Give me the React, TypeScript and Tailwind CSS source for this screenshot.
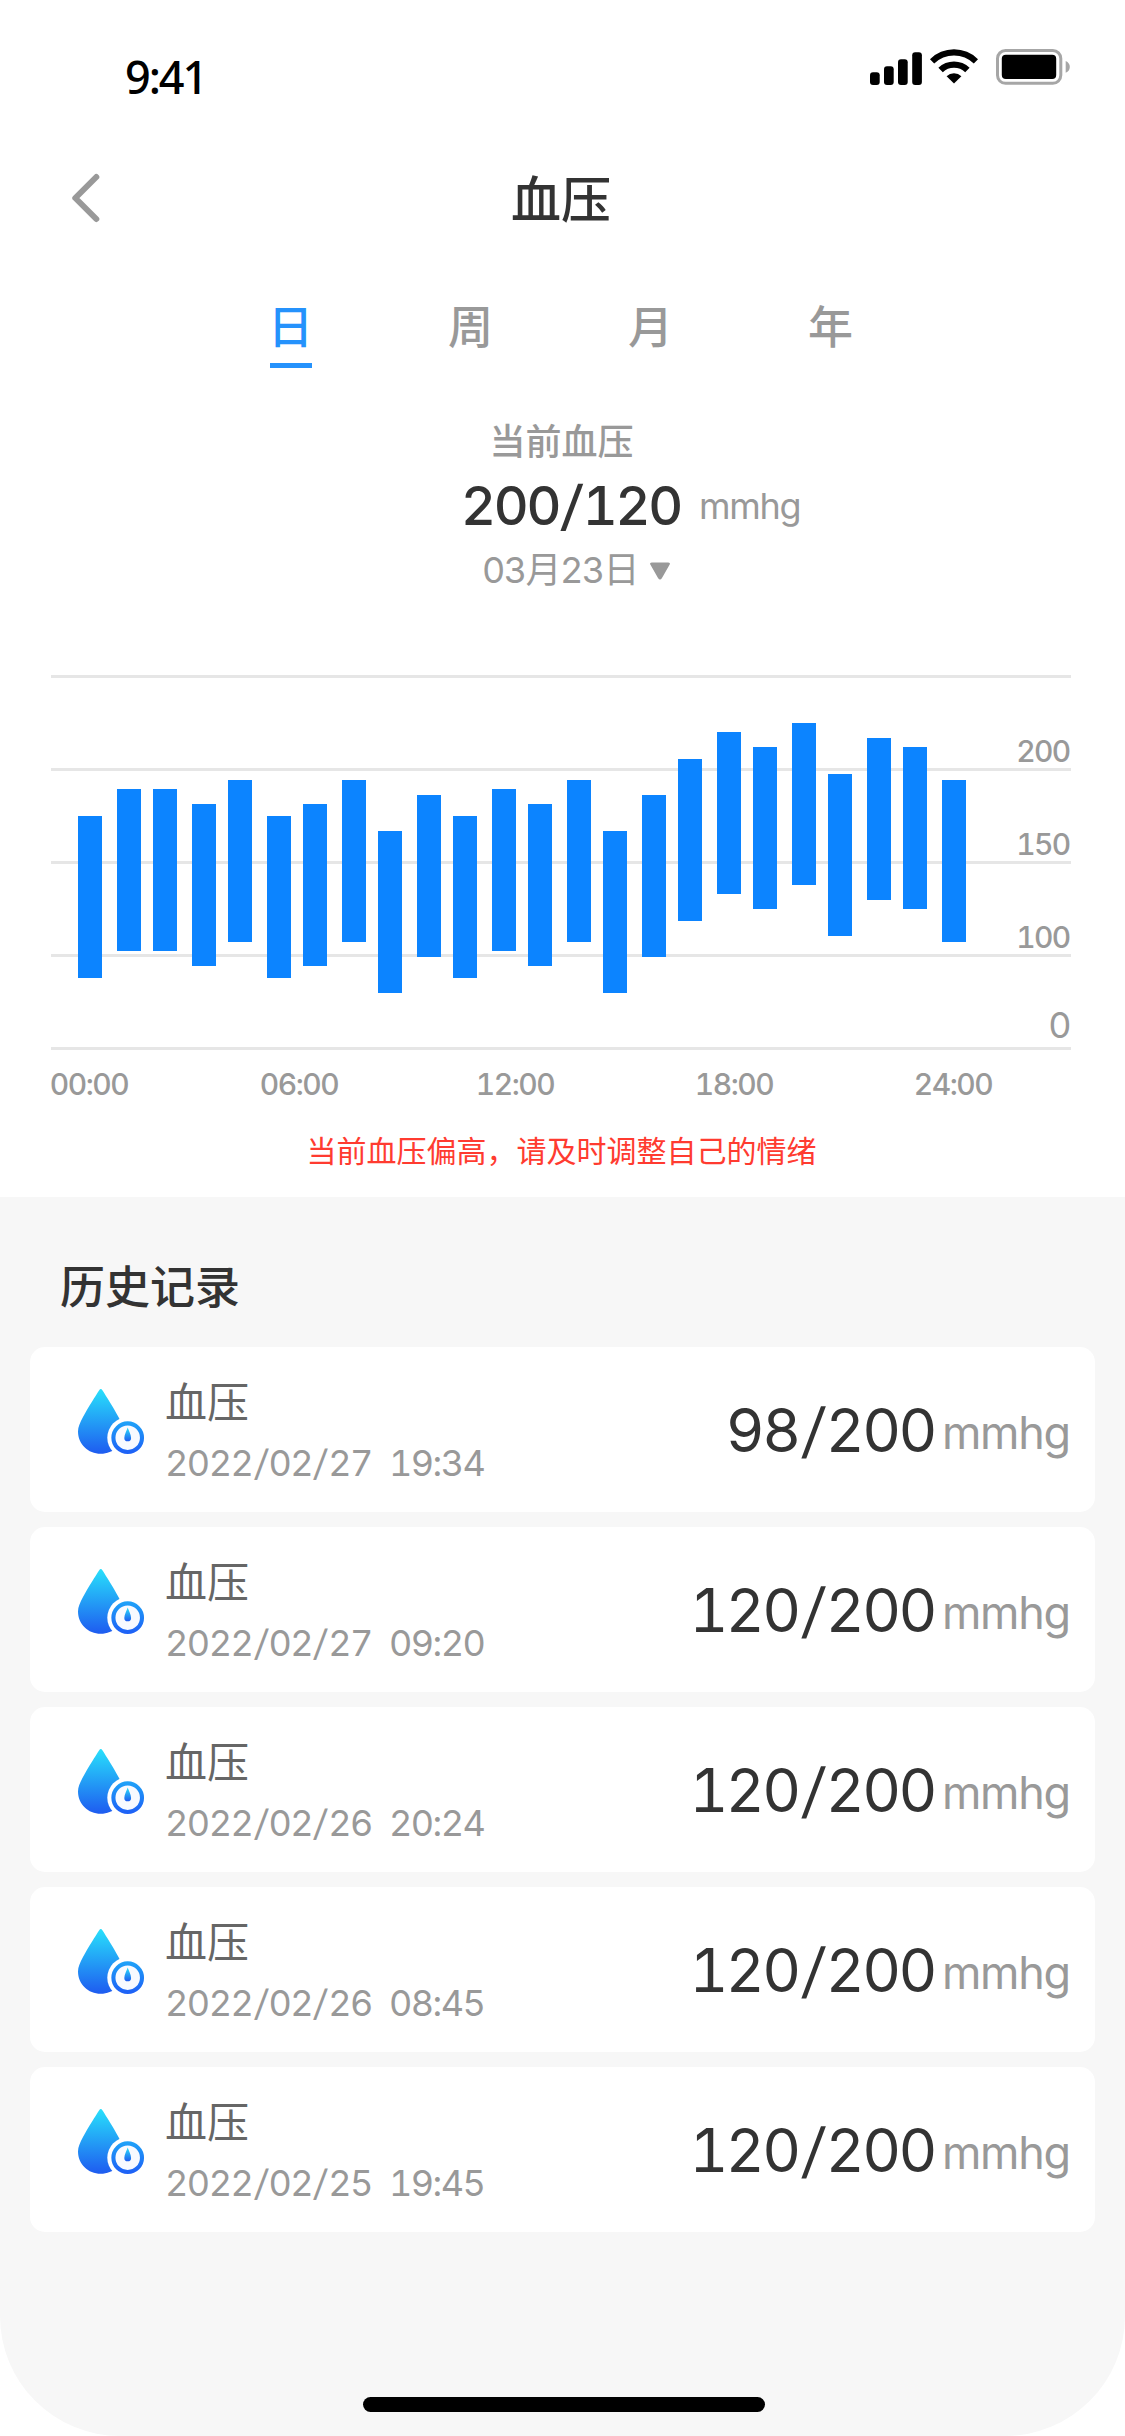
import { useState } from "react"

const tabs = ["日", "周", "月", "年"]

const records = [
  { date: "2022/02/27", time: "19:34", value: "98/200" },
  { date: "2022/02/27", time: "09:20", value: "120/200" },
  { date: "2022/02/26", time: "20:24", value: "120/200" },
  { date: "2022/02/26", time: "08:45", value: "120/200" },
  { date: "2022/02/25", time: "19:45", value: "120/200" },
]

// top of every bar, all bars share the same height
const tops = [
  156, 129, 129, 144, 120, 156, 144, 120, 171, 135, 156, 129,
  144, 120, 171, 135, 99, 72, 87, 63, 114, 78, 87, 120,
]

// bars come in pairs: 39px then 36px apart
const barX = (i: number) => 78 + Math.floor(i / 2) * 75 + (i % 2) * 39

const hours = [
  { label: "00:00", x: 90 },
  { label: "06:00", x: 300 },
  { label: "12:00", x: 516 },
  { label: "18:00", x: 735 },
  { label: "24:00", x: 954 },
]

// digits sit tight, the slash between them gets some air
const Slashed = ({ text, slash }: { text: string; slash: string }) => (
  <>
    {text.split("/").map((part, i) => (
      <span key={i}>{i > 0 && <span className={`inline-block -skew-x-6 ${slash}`}>/</span>}{part}</span>
    ))}
  </>
)

const StatusBar = () => (
  <div className="flex h-[132px] shrink-0 justify-between">
    <span className="pt-[46px] pl-[125px] font-['Noto_Sans'] text-[45px] leading-[62px] font-medium tracking-[-2.1px] text-black">9:41</span>
    <svg className="mt-[45px] mr-[53px]" width="204" height="44" viewBox="868 45 204 44" fill="black">
      <rect x="870" y="72.3" width="9.7" height="12.7" rx="3" />
      <rect x="884" y="66.3" width="9.7" height="18.7" rx="3" />
      <rect x="898" y="59.3" width="9.7" height="25.7" rx="3" />
      <rect x="912.2" y="52.3" width="9.7" height="32.7" rx="3" />
      <path d="M930 59.2 A34 34 0 0 1 978 59.2 L973.8 63.6 A28 28 0 0 0 934.2 63.6 Z" />
      <path d="M938.4 67.8 A22.3 22.3 0 0 1 969.6 67.8 L965.2 72.2 A16.2 16.2 0 0 0 942.8 72.2 Z" />
      <path d="M946.6 76.2 A10.8 10.8 0 0 1 961.4 76.2 L954 83.4 Z" />
      <rect x="997.5" y="50.5" width="63.3" height="32.8" rx="8" fill="none" stroke="#a6a6a6" strokeWidth="3" />
      <rect x="1001.8" y="54.8" width="54.4" height="24.2" rx="4" />
      <path d="M1065.7 61 Q1069.8 63 1069.8 66.9 Q1069.8 70.8 1065.7 72.8 Z" fill="#a6a6a6" />
    </svg>
  </div>
)

const Chart = () => (
  <svg className="mt-[68px] block" width="1125" height="450" viewBox="0 0 1125 450">
    {[15, 108, 201, 294, 387].map(y => (
      <rect key={y} x="51" y={y} width="1020" height="3" fill="#e6e6e6" />
    ))}
    {tops.map((y, i) => (
      <rect key={i} x={barX(i)} y={y} width="24" height="162" fill="#0c84ff" />
    ))}
    <g fill="#999999" textAnchor="end" className="text-[30px] font-medium tracking-[-1.7px] tabular-nums">
      <text x="1069.5" y="102">200</text>
      <text x="1069.5" y="195">150</text>
      <text x="1069.5" y="288">100</text>
      <text x="1070" y="378" className="text-[36px] font-normal">0</text>
    </g>
    <g fill="#999999" textAnchor="middle" className="text-[30px] font-medium tracking-[-1.5px] tabular-nums">
      {hours.map(h => <text key={h.label} x={h.x - 1} y="435">{h.label}</text>)}
    </g>
  </svg>
)

const DropIcon = ({ id }: { id: string }) => (
  <svg className="mt-[39px] ml-[45px] shrink-0" width="72" height="72" viewBox="75 1386 72 72">
    <defs>
      <linearGradient id={`drop-${id}`} x1="0" y1="0" x2="0" y2="1">
        <stop offset="0" stopColor="#28e0fb" />
        <stop offset="1" stopColor="#1e5bf0" />
      </linearGradient>
      <linearGradient id={`ring-${id}`} x1="0" y1="0" x2="0" y2="1">
        <stop offset="0" stopColor="#1f9ff8" />
        <stop offset="1" stopColor="#1e62f6" />
      </linearGradient>
    </defs>
    <path
      d="M99.2 1390.3 Q100.8 1387.8 102.4 1390.3 C106 1396 113 1407 118.5 1417 C121.5 1422.5 123.6 1427 123.6 1431.5 C123.6 1444 113.5 1453.8 100.8 1453.8 C88.1 1453.8 78 1444 78 1431.5 C78 1427 80 1422.5 83 1417 C88.5 1407 95.6 1396 99.2 1390.3 Z"
      fill={`url(#drop-${id})`}
    />
    <circle cx="127.7" cy="1437.7" r="20.4" fill="white" />
    <circle cx="127.7" cy="1437.7" r="14.3" fill="#f8faff" stroke={`url(#ring-${id})`} strokeWidth="4.1" />
    <path
      d="M127.7 1427.6 C128.5 1430.5 131.1 1434.6 131.1 1437.9 A3.4 3.4 0 0 1 124.3 1437.9 C124.3 1434.6 126.9 1430.5 127.7 1427.6 Z"
      fill={`url(#drop-${id})`}
    />
  </svg>
)

export default function App() {
  const [active, setActive] = useState("日")

  return (
    <div className="w-[1125px] h-[2436px] bg-white font-[Inter,'Noto_Sans_CJK_SC',sans-serif] text-[#333333]">
      <div className="flex h-full flex-col overflow-hidden rounded-b-[120px]">

        <div className="flex h-[1197px] shrink-0 flex-col bg-white">
          <StatusBar />

          {/* Nav bar */}
          <div className="grid h-[132px] shrink-0 grid-cols-[200px_1fr_200px] items-center">
            <svg className="ml-[66px]" width="40" height="54" viewBox="66 171 40 54" fill="none">
              <path d="M96.3 177 L75.3 198 L96.3 219" stroke="#999999" strokeWidth="6" strokeLinecap="round" strokeLinejoin="round" />
            </svg>
            <h1 className="pt-[3px] pr-[3px] text-center text-[50px] leading-[60px] font-medium">血压</h1>
          </div>

          {/* Period tabs */}
          <div className="flex gap-[135px] pt-[34px] pl-[268px]">
            {tabs.map(tab => (
              <button key={tab} onClick={() => setActive(tab)} className="flex w-[45px] flex-col items-center">
                <span className={`text-[45px] leading-[60px] font-medium ${tab === active ? "text-[#2592fc]" : "text-[#999999]"}`}>{tab}</span>
                <span className={`mt-[5px] h-[5px] w-[42px] ${tab === active ? "bg-[#2592fc]" : ""}`} />
              </button>
            ))}
          </div>

          <div className="mt-[52px] pr-[2px] text-center text-[36px] leading-[44px] font-medium text-[#999999]">当前血压</div>
          <div className="mt-[12px] flex pl-[461px] leading-[60px]">
            <span className="w-[238px] text-[54px] font-medium tracking-[-2.3px] tabular-nums"><Slashed text="200/120" slash="mx-[3px]" /></span>
            <span className="text-[36px] tracking-[-1.3px] text-[#999999]">mmhg</span>
          </div>
          <div className="mt-[12px] flex items-center pl-[482px] text-[36px] leading-[44px] text-[#999999] tabular-nums">
            <span className="w-[167px] tracking-[-1.6px]">03月23日</span>
            <svg className="mt-[2px]" width="22" height="20" viewBox="0 0 22 20" fill="#999999">
              <path d="M3 1.5 H19 Q22 1.5 20.4 4 L13 17 Q11 20 9 17 L1.6 4 Q0 1.5 3 1.5 Z" />
            </svg>
          </div>

          <Chart />

          <p className="mt-[21px] pr-[2px] text-center text-[30px] leading-[40px] text-[#ff3b30]">当前血压偏高，请及时调整自己的情绪</p>
        </div>

        {/* History */}
        <div className="flex flex-1 flex-col bg-[#f7f7f7] px-[30px] pt-[61px]">
          <h2 className="pl-[30px] text-[45px] leading-[60px] font-medium">历史记录</h2>
          <div className="mt-[29px] flex flex-col gap-[15px]">
            {records.map((r, i) => (
              <div key={i} className="flex h-[165px] rounded-[15px] bg-white">
                <DropIcon id={String(i)} />
                <div className="ml-[18px] flex flex-col pt-[31px]">
                  <span className="text-[42px] leading-[50px] text-[#666666]">血压</span>
                  <span className="mt-[13px] flex gap-[17px] text-[36px] leading-[44px] tracking-[-1.5px] text-[#999999] tabular-nums">
                    <span><Slashed text={r.date} slash="mx-[2.3px]" /></span>
                    <span>{r.time}</span>
                  </span>
                </div>
                <div className="ml-auto flex pt-[53px] leading-[60px]">
                  <span className="text-[60px] tracking-[-2.5px] tabular-nums"><Slashed text={r.value} slash="mx-[4px]" /></span>
                  <span className="w-[160px] pt-[3px] pl-[7px] text-[45px] tracking-[-1.3px] text-[#999999]">mmhg</span>
                </div>
              </div>
            ))}
          </div>

          {/* Home indicator */}
          <div className="mt-auto mb-[24px] ml-[3px] h-[15px] w-[402px] self-center rounded-full bg-black" />
        </div>

      </div>
    </div>
  )
}
